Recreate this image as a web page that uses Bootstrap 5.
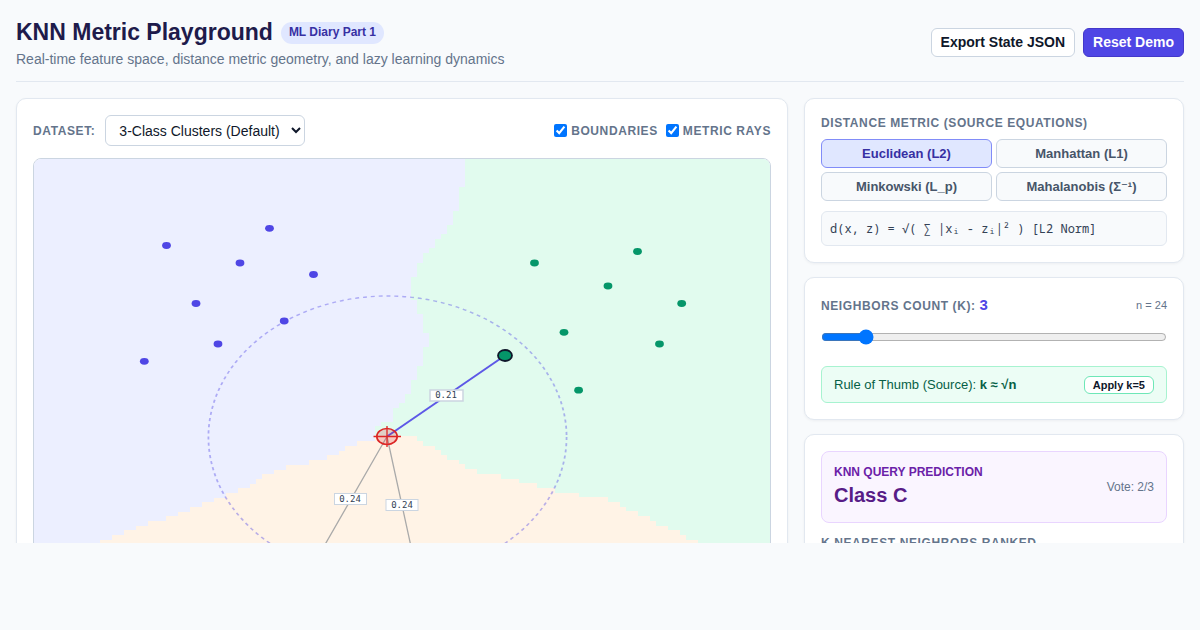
<!DOCTYPE html>
<html lang="en">
<head>
<meta charset="utf-8">
<meta name="viewport" content="width=device-width, initial-scale=1">
<title>KNN Metric Playground</title>
<link href="https://cdn.jsdelivr.net/npm/bootstrap@5.3.0/dist/css/bootstrap.min.css" rel="stylesheet">
<style>
body{font-family:"Liberation Sans",Arial,"DejaVu Sans",sans-serif;background:#f8fafc;color:#0f172a;font-size:13px;line-height:20px}
.page-head{border-bottom:1px solid #e2e8f0;padding-bottom:12px}
.app-title{font-size:23px;line-height:33px;font-weight:700;color:#1e1b4b}
.part-tag{background:#e0e7ff;color:#3730a3;font-size:12px;line-height:18px;font-weight:700;padding:1px 8px 3px;border-radius:11px}
.subtitle{color:#64748b;font-size:14px}
.action{font-size:14px;line-height:15px;font-weight:700;padding:6px 9px;border:1px solid #cbd5e1;border-radius:6px;background:#fff;color:#0f172a}
.action-main{background:#4f46e5;border-color:#4338ca;color:#fff}
.workspace{height:calc(100vh - 87px);overflow:hidden}
.columns{display:grid;grid-template-columns:minmax(0,1fr) 380px;gap:16px;align-items:start}
.side{display:grid;gap:14px}
.panel{background:#fff;border:1px solid #e2e8f0;border-radius:10px;padding:16px;box-shadow:0 1px 3px rgba(15,23,42,.05)}
.caption-text{font-size:12px;line-height:16px;font-weight:700;letter-spacing:.6px;color:#64748b;text-transform:uppercase}
.picker{gap:10px}
.dataset{font-size:14px;line-height:15px;height:31px;padding:6px 8px 6px 9px;border:1px solid #cbd5e1;border-radius:6px;background:#fff;color:#0f172a}
.plot-area{border:1px solid #cbd5e1;border-radius:8px;overflow:hidden}
.plot-area svg{width:100%;height:460px}
.plot-area text{font:9px "DejaVu Sans Mono",monospace;fill:#334155;text-anchor:middle}
.metrics{display:grid;grid-template-columns:1fr 1fr;gap:4px}
.metric{font-size:13px;line-height:15px;font-weight:700;padding:6px;border:1px solid #cbd5e1;border-radius:6px;background:#f8fafc;color:#475569}
.metric-on{background:#e0e7ff;border-color:#818cf8;color:#3730a3}
.formula{font:12px/17px "Noto Sans Mono","DejaVu Sans Mono",monospace;margin-top:10px;padding:8px;border:1px solid #e2e8f0;border-radius:6px;background:#f8fafc;color:#334155}
.k-head{height:22px;margin-bottom:12px}
.k-value{font-size:15px;letter-spacing:0;color:#4f46e5}
.k-range{width:100%;height:18px;margin:0 0 20px}
.rule{border:1px solid #a7f3d0;border-radius:6px;background:#ecfdf5;color:#065f46;padding:8px 12px;line-height:19px}
.apply{font-size:11px;line-height:12px;font-weight:700;padding:2px 8px;border:1px solid #6ee7b7;border-radius:6px;background:#fff;color:#0f172a}
.result{border:1px solid #e9d5ff;border-radius:8px;background:#faf5ff;padding:12px}
.result-label{font-size:12px;line-height:16px;font-weight:700;color:#6b21a8}
.result-class{font-size:20px;line-height:30px;font-weight:700;color:#581c87}
.note{font-size:11px;line-height:16px;color:#64748b}
.vote{font-size:12px;line-height:16px;color:#64748b}
</style>
</head>
<body class="overflow-hidden">
<div class="workspace px-3 pt-3">
<header class="page-head d-flex justify-content-between align-items-center mb-3">
<div>
<div class="d-flex align-items-center gap-2"><h1 class="app-title mb-0">KNN Metric Playground</h1><span class="part-tag">ML Diary Part 1</span></div>
<p class="subtitle mb-0">Real-time feature space, distance metric geometry, and lazy learning dynamics</p>
</div>
<div class="d-flex gap-2"><button type="button" class="action">Export State JSON</button><button type="button" class="action action-main">Reset Demo</button></div>
</header>
<main class="columns">
<section class="panel">
<div class="d-flex justify-content-between align-items-center mb-2 pb-1">
<div class="d-flex align-items-center picker"><label for="dataset" class="caption-text">Dataset:</label>
<select id="dataset" class="dataset"><option>3-Class Clusters (Default)</option></select></div>
<div class="d-flex gap-2">
<label class="caption-text d-flex align-items-center gap-1"><input type="checkbox" checked>Boundaries</label>
<label class="caption-text d-flex align-items-center gap-1"><input type="checkbox" checked>Metric rays</label>
</div>
</div>
<div class="plot-area">
<svg class="d-block" viewBox="0 0 736 460" preserveAspectRatio="none" role="img" aria-label="Feature space">
<rect width="736" height="460" fill="#ecefff"/>
<g shape-rendering="crispEdges">
<path fill="#e1fbee" d="M431 0V28H425V52H419V66H413V75H407V80H401V89H395V94H389V104H383V118H377V141H383V155H389V174H395V188H389V207H383V221H377V235H371V244H365V249H359V263H347V267H341V460H736V0Z"/>
<path fill="#fff3e6" d="M0 460V421H18V412H42V398H54V388H66V381H78V376H90V371H102V367H114V362H132V357H144V353H156V348H168V343H180V339H192V334H204V329H216V325H222V320H228V315H240V311H252V306H275V301H293V296H305V292H311V287H323V282H341V277H383V282H389V287H401V291H407V296H413V301H425V305H431V310H443V315H467V320H485V324H503V329H521V334H545V338H574V343H586V348H592V352H604V357H616V362H622V367H634V371H646V376H652V381H664V386H676V398H694V412H736V460Z"/>
</g>
<circle r="141" transform="translate(353.5 278) scale(1.27 1)" fill="none" stroke="#4f46e5" stroke-opacity=".4" stroke-width="1.4" stroke-dasharray="3.1 3.1"/>
<path stroke="#aaa" stroke-width="1.3" fill="none" d="M353 277.5L281 403M353 277.5L383 415"/>
<path d="M353 277.5L471 196.5" stroke="#4f46e5" stroke-opacity=".9" stroke-width="2"/>
<g fill="#4f46e5">
<ellipse cx="132.500" cy="86.500" rx="4.400" ry="3.400"/><ellipse cx="235.500" cy="69.300" rx="4.400" ry="3.400"/><ellipse cx="206" cy="104" rx="4.400" ry="3.400"/><ellipse cx="279.500" cy="115.500" rx="4.400" ry="3.400"/><ellipse cx="162" cy="144.500" rx="4.400" ry="3.400"/><ellipse cx="250.200" cy="162" rx="4.400" ry="3.400"/><ellipse cx="184" cy="185" rx="4.400" ry="3.400"/><ellipse cx="110.300" cy="202.300" rx="4.400" ry="3.400"/>
</g>
<g fill="#059669">
<ellipse cx="500.500" cy="104" rx="4.400" ry="3.400"/><ellipse cx="603.500" cy="92.500" rx="4.400" ry="3.400"/><ellipse cx="574" cy="127" rx="4.400" ry="3.400"/><ellipse cx="647.700" cy="144.500" rx="4.400" ry="3.400"/><ellipse cx="530" cy="173.300" rx="4.400" ry="3.400"/><ellipse cx="625.500" cy="185" rx="4.400" ry="3.400"/><ellipse cx="544.600" cy="231.200" rx="4.400" ry="3.400"/>
<ellipse cx="471" cy="196.500" rx="7" ry="5.500" stroke="#0f172a" stroke-width="1.800"/>
</g>
<g fill="#dc2626" stroke="#dc2626" stroke-width="1.700"><ellipse cx="353" cy="277.500" rx="10.200" ry="8" fill-opacity=".2"/><path stroke-width="1.300" d="M339.500 277.500H367M353 267V288"/></g>
<g fill="#fff" stroke="#cbd5e1">
<rect x="396" y="231" width="33" height="11" stroke-width="1.500"/><rect x="300.500" y="334.500" width="32" height="11"/><rect x="352" y="340.500" width="32" height="11"/>
</g>
<text x="412" y="239">0.21</text><text x="316" y="343">0.24</text><text x="368" y="349">0.24</text>
</svg>
</div>
</section>
<aside class="side">
<section class="panel">
<h2 class="caption-text mb-2">Distance metric (source equations)</h2>
<div class="metrics">
<button type="button" class="metric metric-on">Euclidean (L2)</button><button type="button" class="metric">Manhattan (L1)</button><button type="button" class="metric">Minkowski (L_p)</button><button type="button" class="metric">Mahalanobis (Σ⁻¹)</button>
</div>
<div class="formula">d(x, z) = √( ∑ |xᵢ - zᵢ|² ) [L2 Norm]</div>
</section>
<section class="panel">
<div class="k-head d-flex justify-content-between align-items-center"><label for="k" class="caption-text">Neighbors count (k): <span class="k-value">3</span></label><span class="note">n = 24</span></div>
<input id="k" class="k-range d-block" type="range" min="1" max="19" value="3">
<div class="rule d-flex justify-content-between align-items-center"><span>Rule of Thumb (Source): <b>k ≈ √n</b></span><button type="button" class="apply">Apply k=5</button></div>
</section>
<section class="panel">
<div class="result d-flex justify-content-between align-items-center"><div><div class="result-label">KNN QUERY PREDICTION</div><div class="result-class">Class C</div></div><span class="vote">Vote: 2/3</span></div>
<h2 class="caption-text mt-2 pt-1">K nearest neighbors ranked</h2>
</section>
</aside>
</main>
</div>
<script src="https://cdn.jsdelivr.net/npm/bootstrap@5.3.0/dist/js/bootstrap.bundle.min.js"></script>
</body>
</html>
